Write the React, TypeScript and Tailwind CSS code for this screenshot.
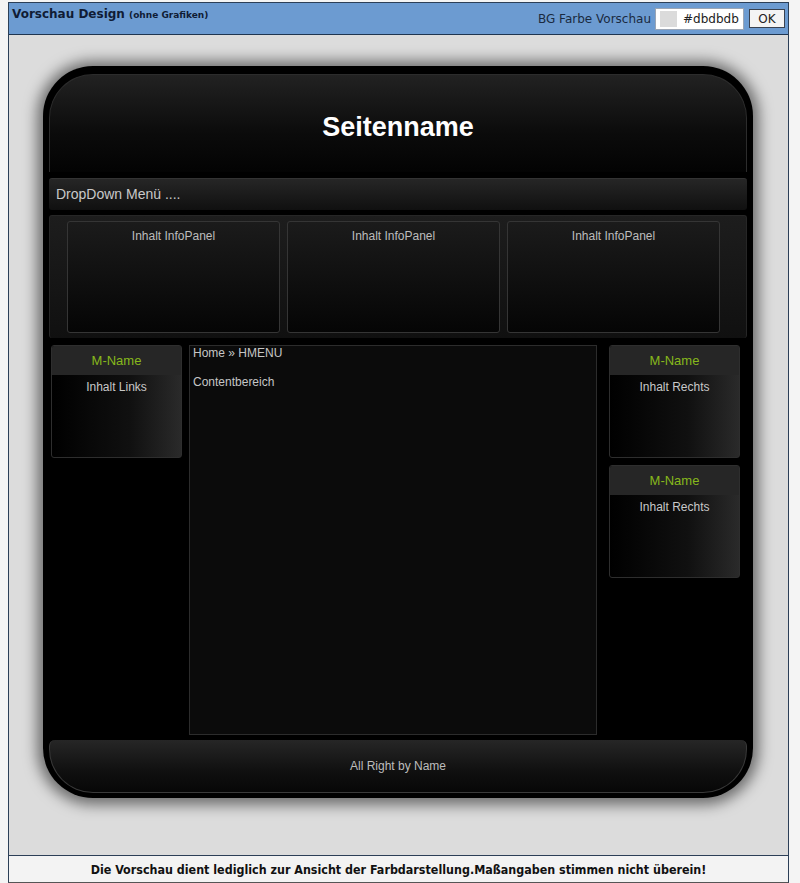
import React from "react";

function SideBox({ title, text }: { title: string; text: string }) {
  return (
    <div className="h-[113px] w-[131px] rounded-[3px] border border-[#2e2e2e] bg-[linear-gradient(to_right,#000000,#101010_60%,#2a2a2a)] flex flex-col overflow-hidden">
      <div className="h-[29px] bg-[#262626] flex items-center justify-center text-[13px] text-[#86b81c]">
        {title}
      </div>
      <div className="pt-[3px] text-center text-[12px] text-[#c8c8c8]">{text}</div>
    </div>
  );
}

function InfoPanel() {
  return (
    <div className="w-[213px] h-[112px] rounded-[3px] border border-[#353535] bg-[linear-gradient(to_bottom,#1b1b1b,#050505)] pt-[5px] text-center text-[12px] text-[#bdbdbd]">
      Inhalt InfoPanel
    </div>
  );
}

export default function App() {
  return (
    <div
      className="h-[883px] w-[800px] bg-[#f4f4f4] pt-[2px] pl-[8px]"
      style={{ fontFamily: '"DejaVu Sans", Verdana, sans-serif' }}
    >
      <div className="w-[781px] border border-[#2c3f57] border-b-[#555]">
        {/* top bar */}
        <div className="h-[32px] bg-[#6c9bd1] border-b border-[#1f3550] flex items-center justify-between pl-[3px] pr-[3px]">
          <div className="text-[#101c35] font-bold text-[12px] leading-none -mt-[10px]">
            Vorschau Design <span className="text-[9px]">(ohne Grafiken)</span>
          </div>
          <div className="flex items-center">
            <span className="text-[12px] text-[#1a2a40] mr-[4px]">BG Farbe Vorschau</span>
            <div className="h-[22px] w-[89px] bg-white border border-[#9aa5b5] flex items-center pl-[4px]">
              <div className="h-[16px] w-[17px] bg-[#dbdbdb]" />
              <span className="ml-[6px] text-[12px] text-[#222]">#dbdbdb</span>
            </div>
            <div className="ml-[5px] h-[19px] w-[36px] bg-[#f4f4f4] border border-[#3a4250] flex items-center justify-center text-[12px] text-[#222]">
              OK
            </div>
          </div>
        </div>

        {/* preview area */}
        <div className="h-[820px] bg-[#dcdcdc] pt-[31px] pl-[34px]">
          <div
            className="w-[710px] h-[732px] rounded-[50px] bg-black pt-[8px] px-[6px] pb-[5px] flex flex-col shadow-[0_1px_14px_6px_rgba(0,0,0,0.5)]"
            style={{ fontFamily: '"Liberation Sans", Arial, sans-serif' }}
          >
            {/* header */}
            <div className="h-[98px] rounded-t-[44px] border-t border-x border-[#2c2c2c] bg-[linear-gradient(to_bottom,#222222,#0b0b0b_60%,#030303)] flex items-center justify-center">
              <span className="text-white font-bold text-[27px] mt-[8px]">Seitenname</span>
            </div>
            {/* menu */}
            <div className="mt-[6px] h-[32px] rounded-[3px] border-t border-[#333] bg-[linear-gradient(to_bottom,#262626,#101010)] flex items-center pl-[7px] text-[14px] text-[#c9c9c9]">
              DropDown Menü ....
            </div>
            {/* info panels */}
            <div className="mt-[5px] h-[123px] rounded-[3px] border-t border-x border-[#262626] bg-[linear-gradient(to_bottom,#1d1d1d,#101010)] pt-[5px] pl-[17px] flex gap-[7px]">
              <InfoPanel />
              <InfoPanel />
              <InfoPanel />
            </div>
            {/* columns */}
            <div className="mt-[7px] h-[390px] flex">
              <div className="ml-[2px] w-[131px]">
                <SideBox title="M-Name" text="Inhalt Links" />
              </div>
              <div className="ml-[7px] w-[408px] h-[390px] border border-[#2c2c2c] bg-[#0b0b0b] px-[3px] text-[12px] leading-[14px] text-[#c6c6c6]">
                <div>Home » HMENU</div>
                <div className="mt-[15px]">Contentbereich</div>
              </div>
              <div className="ml-[12px] w-[131px] flex flex-col gap-[7px]">
                <SideBox title="M-Name" text="Inhalt Rechts" />
                <SideBox title="M-Name" text="Inhalt Rechts" />
              </div>
            </div>
            {/* footer */}
            <div className="mt-[5px] h-[53px] rounded-b-[44px] rounded-t-[6px] border-b border-x border-[#3a3a3a] bg-[linear-gradient(to_bottom,#262626,#101010_60%,#070707)] flex items-center justify-center text-[12px] text-[#bdbdbd]">
              All Right by Name
            </div>
          </div>
        </div>

        {/* bottom strip */}
        <div
          className="h-[27px] border-t border-[#2c3f57] bg-[#f3f3f3] flex items-center justify-center pt-[3px] text-[12.4px] font-bold text-[#111]"
          style={{ fontFamily: '"DejaVu Sans Condensed", "DejaVu Sans", sans-serif' }}
        >
          Die Vorschau dient lediglich zur Ansicht der Farbdarstellung.Maßangaben stimmen nicht überein!
        </div>
      </div>
    </div>
  );
}
